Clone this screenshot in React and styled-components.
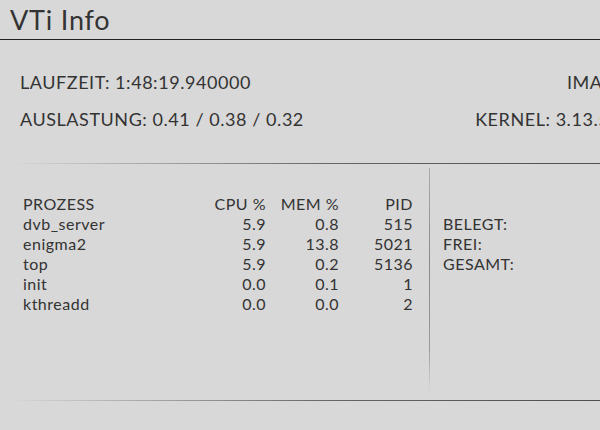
import styled, { createGlobalStyle } from 'styled-components'

const GlobalStyle = createGlobalStyle`
    body {
        margin: 0;
        background: #d8d8d8;
        overflow: hidden;
        font-family: Lato, "Open Sans", sans-serif;
        color: #333;
    }
`

const Screen = styled.div`
    width: 720px;
    height: 430px;
    display: flex;
    flex-direction: column;
`

const Header = styled.h1`
    margin: 0;
    height: 39px;
    line-height: 40px;
    padding-left: 10px;
    font-size: 27px;
    font-weight: 400;
    letter-spacing: 0.8px;
    color: #333;
    border-bottom: 1px solid #222;
`

const Info = styled.div`
    display: flex;
    justify-content: space-between;
    padding: 24px 61px 0 20px;
`

const InfoCol = styled.div`
    display: flex;
    flex-direction: column;
    text-align: ${p => (p.$right ? 'right' : 'left')};
    font-size: 18px;
    line-height: 37px;
    letter-spacing: 0.55px;
    white-space: nowrap;
`

const Divider = styled.div`
    height: 1px;
    margin-left: 10px;
    margin-top: ${p => p.$top || 0}px;
    background: linear-gradient(to right, rgba(80, 80, 80, 0), #666 45%, #444);
`

const Panel = styled.div`
    display: flex;
    height: 236px;
`

const Processes = styled.div`
    position: relative;
    width: 430px;
    box-sizing: border-box;
    padding: 30px 17px 0 23px;
    &::after {
        content: '';
        position: absolute;
        right: 0;
        top: 4px;
        bottom: 8px;
        width: 1px;
        background: linear-gradient(to bottom, #aaa, #888 40%, #999 80%, rgba(150, 150, 150, 0));
    }
`

const Table = styled.div`
    display: grid;
    grid-template-columns: 1fr 70px 73px 74px;
    font-size: 16px;
    line-height: 20px;
    letter-spacing: 0.5px;
`

const Cell = styled.span`
    text-align: ${p => (p.$num ? 'right' : 'left')};
`

const Memory = styled.div`
    display: flex;
    flex-direction: column;
    padding: 50px 0 0 13px;
    font-size: 16px;
    line-height: 20px;
    letter-spacing: 0.5px;
`

const procs = [
    ['dvb_server', '5.9', '0.8', '515'],
    ['enigma2', '5.9', '13.8', '5021'],
    ['top', '5.9', '0.2', '5136'],
    ['init', '0.0', '0.1', '1'],
    ['kthreadd', '0.0', '0.0', '2'],
]

export default function App() {
    return (
        <Screen>
            <GlobalStyle />
            <Header>VTi Info</Header>
            <Info>
                <InfoCol>
                    <span>LAUFZEIT: 1:48:19.940000</span>
                    <span>AUSLASTUNG: 0.41 / 0.38 / 0.32</span>
                </InfoCol>
                <InfoCol $right>
                    <span>IMAGE: 15</span>
                    <span>KERNEL: 3.13.5-2.6.1</span>
                </InfoCol>
            </Info>
            <Divider $top={25} />
            <Panel>
                <Processes>
                    <Table>
                        <Cell>PROZESS</Cell>
                        <Cell $num>CPU %</Cell>
                        <Cell $num>MEM %</Cell>
                        <Cell $num>PID</Cell>
                        {procs.map(row => row.map((v, i) => (
                            <Cell key={row[0] + i} $num={i > 0}>{v}</Cell>
                        )))}
                    </Table>
                </Processes>
                <Memory>
                    <span>BELEGT:</span>
                    <span>FREI:</span>
                    <span>GESAMT:</span>
                </Memory>
            </Panel>
            <Divider />
        </Screen>
    )
}
